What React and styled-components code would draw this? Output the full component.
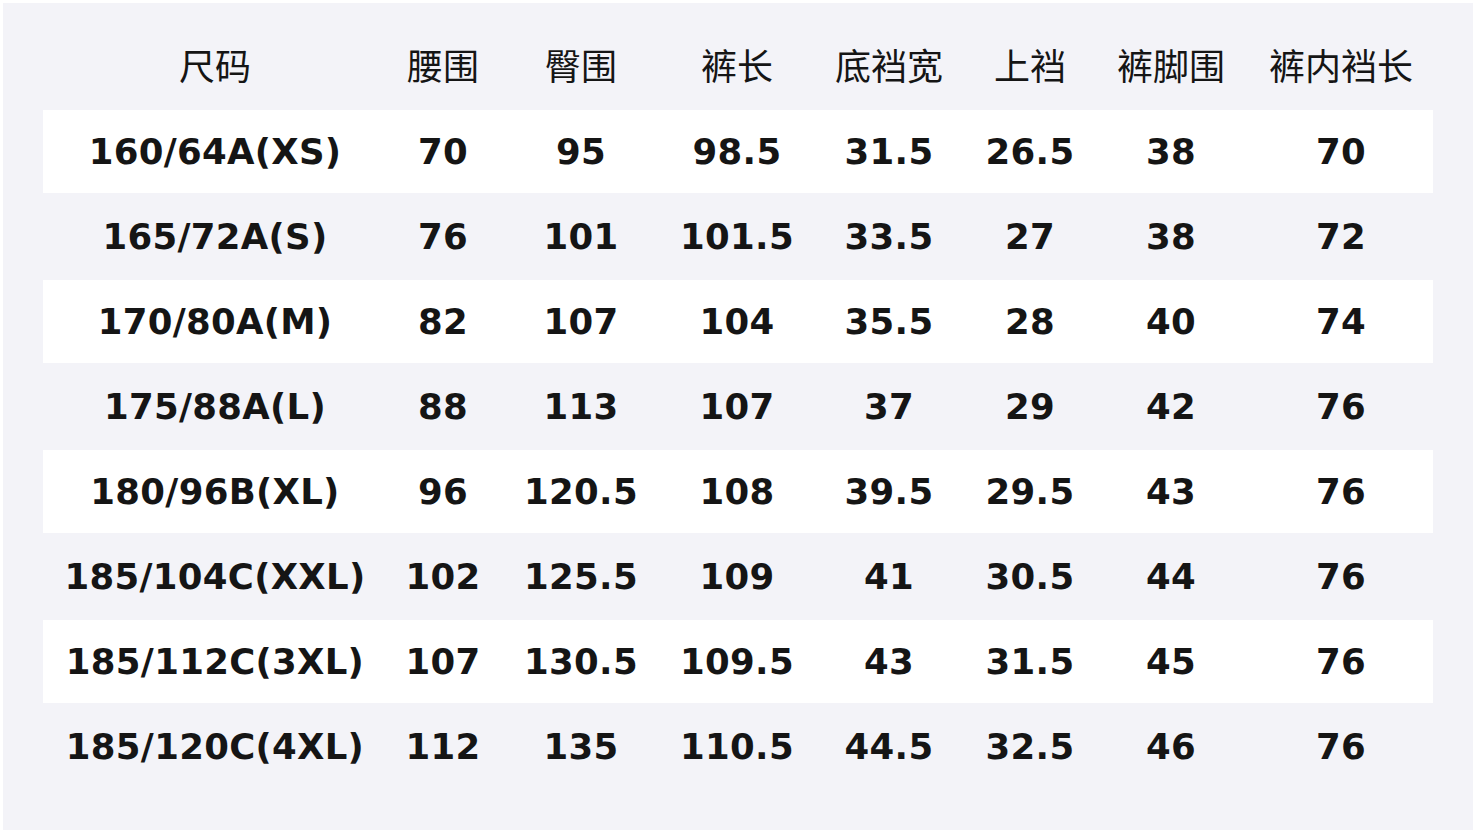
import React from 'react';
import styled, { createGlobalStyle } from 'styled-components';

const GlobalStyle = createGlobalStyle`
  html, body {
    margin: 0;
    padding: 0;
    background: #ffffff;
  }
  body {
    font-family: "DejaVu Sans", "Noto Sans CJK SC", sans-serif;
  }
`;

const Page = styled.div`
  width: 1476px;
  height: 833px;
  box-sizing: border-box;
  padding: 3px;
  background: #ffffff;
`;

const Panel = styled.div`
  height: 100%;
  box-sizing: border-box;
  padding: 22px 40px 0 40px;
  background: #f3f3f8;
`;

const COLS = '344px 112px 164px 148px 156px 126px 156px 184px';

const HeaderRow = styled.div`
  display: grid;
  grid-template-columns: ${COLS};
  height: 84px;
  box-sizing: border-box;
  padding-bottom: 6px;
  align-items: center;
`;

const HeadCell = styled.div`
  text-align: center;
  font-family: "Noto Sans CJK SC", "DejaVu Sans", sans-serif;
  font-size: 36px;
  font-weight: 400;
  color: #151515;
  white-space: nowrap;
`;

const Row = styled.div`
  display: grid;
  grid-template-columns: ${COLS};
  height: 85px;
  box-sizing: border-box;
  align-items: center;
  border-top: 1px solid transparent;
  border-bottom: 1px solid transparent;
  background: ${(p) => (p.$striped ? '#ffffff' : 'transparent')};
  background-clip: padding-box;
`;

const Cell = styled.div`
  text-align: center;
  font-family: "DejaVu Sans", sans-serif;
  font-size: 35.5px;
  letter-spacing: 0.3px;
  font-weight: 700;
  color: #151515;
  white-space: nowrap;
`;

const headers = ['尺码', '腰围', '臀围', '裤长', '底裆宽', '上裆', '裤脚围', '裤内裆长'];

const rows = [
  ['160/64A(XS)', '70', '95', '98.5', '31.5', '26.5', '38', '70'],
  ['165/72A(S)', '76', '101', '101.5', '33.5', '27', '38', '72'],
  ['170/80A(M)', '82', '107', '104', '35.5', '28', '40', '74'],
  ['175/88A(L)', '88', '113', '107', '37', '29', '42', '76'],
  ['180/96B(XL)', '96', '120.5', '108', '39.5', '29.5', '43', '76'],
  ['185/104C(XXL)', '102', '125.5', '109', '41', '30.5', '44', '76'],
  ['185/112C(3XL)', '107', '130.5', '109.5', '43', '31.5', '45', '76'],
  ['185/120C(4XL)', '112', '135', '110.5', '44.5', '32.5', '46', '76'],
];

export default function App() {
  return (
    <>
      <GlobalStyle />
      <Page>
        <Panel>
          <HeaderRow>
            {headers.map((h) => (
              <HeadCell key={h}>{h}</HeadCell>
            ))}
          </HeaderRow>
          {rows.map((r, i) => (
            <Row key={r[0]} $striped={i % 2 === 0}>
              {r.map((v, j) => (
                <Cell key={j}>{v}</Cell>
              ))}
            </Row>
          ))}
        </Panel>
      </Page>
    </>
  );
}
